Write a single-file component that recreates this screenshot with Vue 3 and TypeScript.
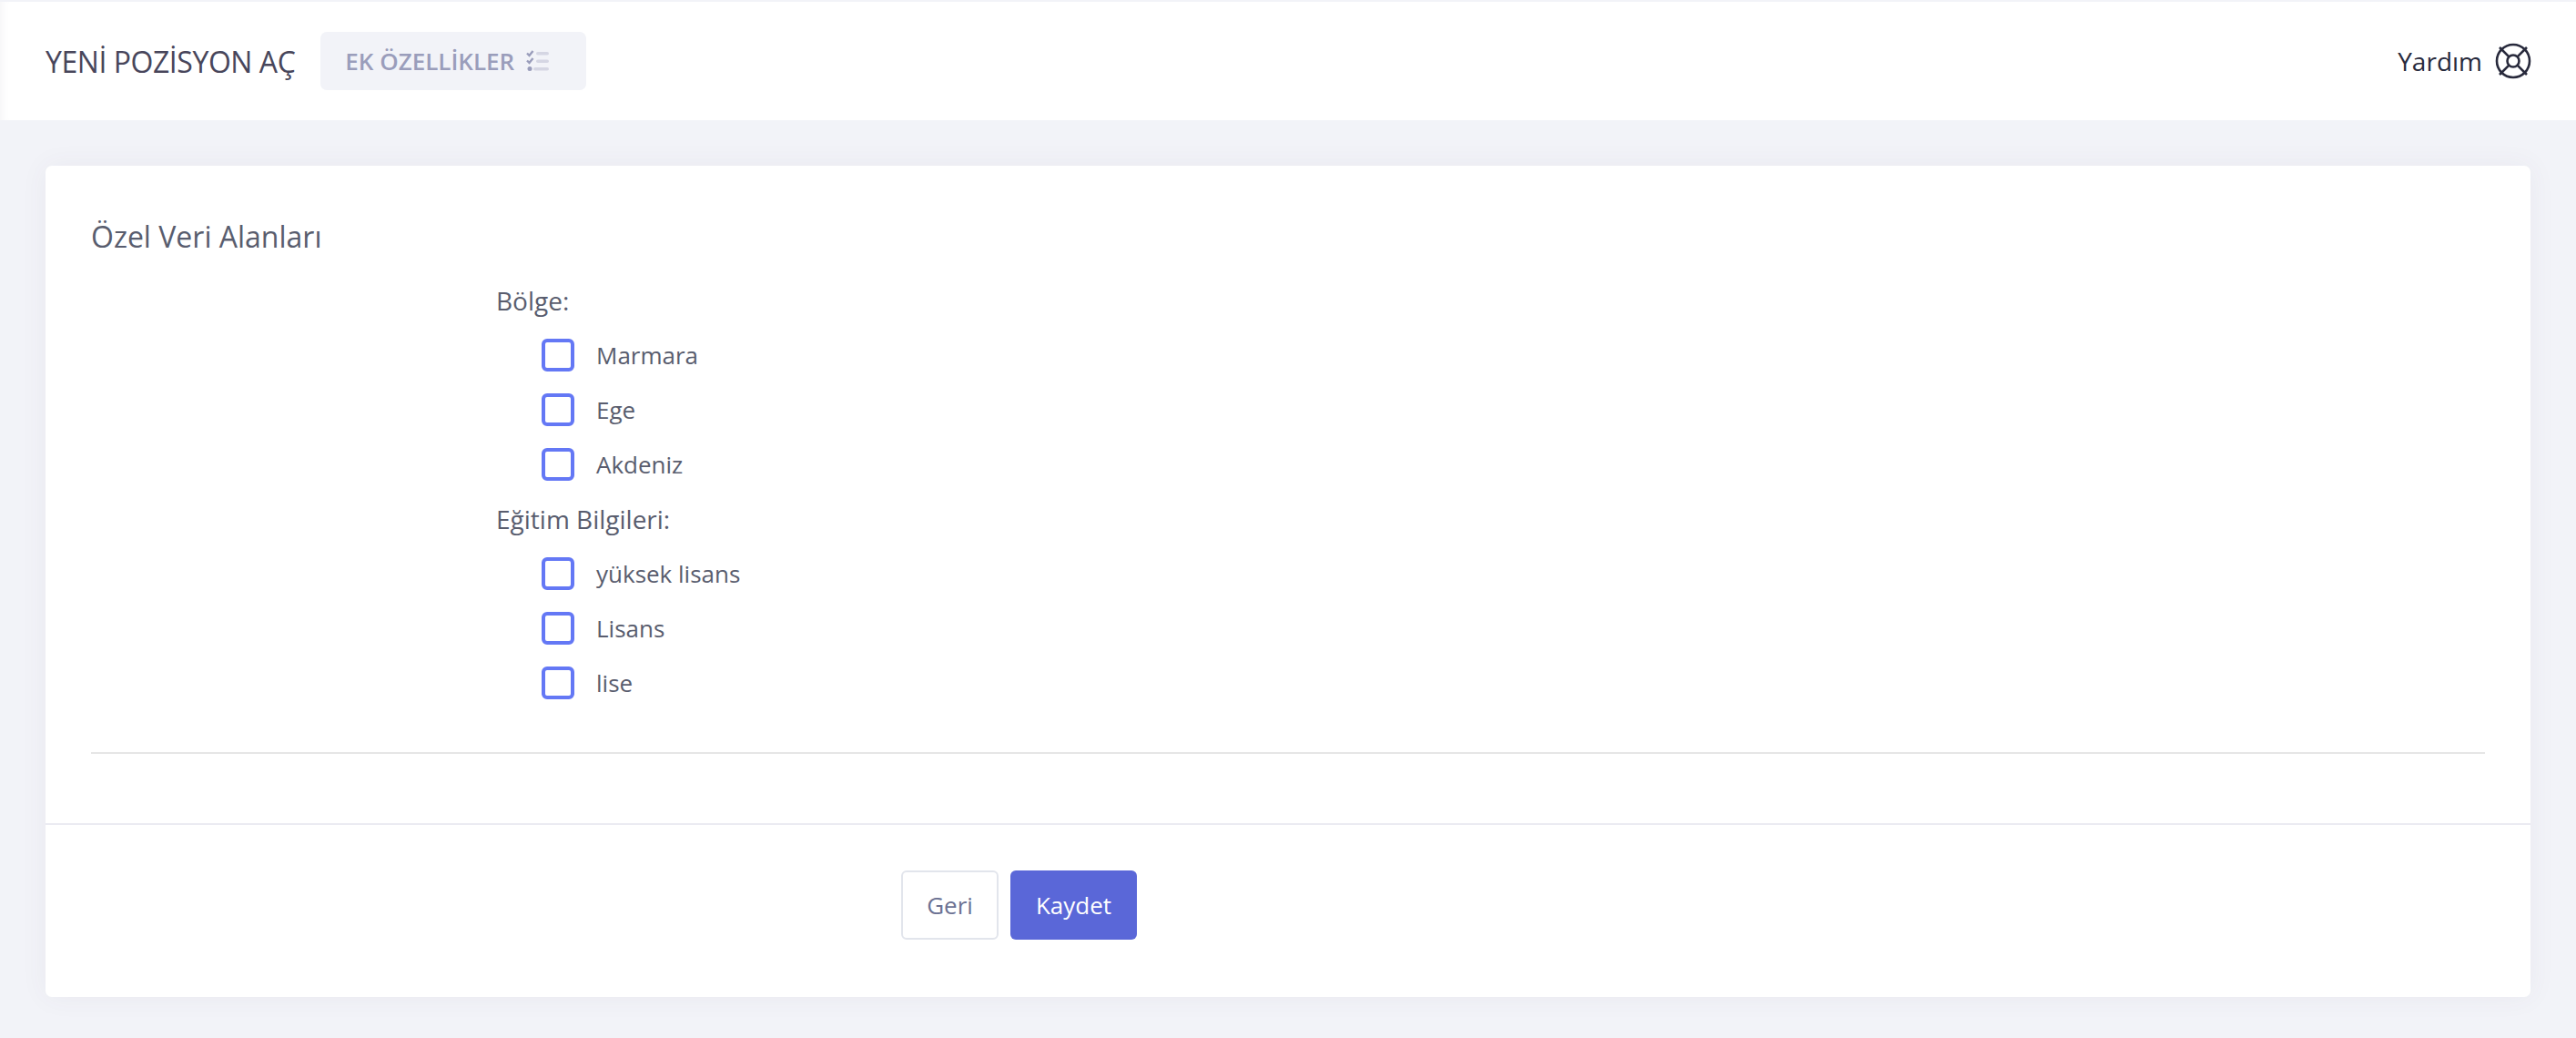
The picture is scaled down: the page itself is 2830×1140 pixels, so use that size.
<script setup lang="ts">
// groupes de cases à cocher du formulaire
const groups = [
  { title: 'Bölge:', options: ['Marmara', 'Ege', 'Akdeniz'] },
  { title: 'Eğitim Bilgileri:', options: ['yüksek lisans', 'Lisans', 'lise'] },
]
</script>

<template>
  <div class="page">
    <header class="topbar">
      <div class="left">
        <h1>YENİ POZİSYON AÇ</h1>
        <button class="extra">
          <span>EK ÖZELLİKLER</span>
          <svg width="26" height="26" viewBox="0 0 26 26" fill="none">
            <path d="M2 4.5l2.5 2.5 4-5" stroke="#9a9dbb" stroke-width="2.4" />
            <path d="M2 12.5l2.5 2.5 4-5" stroke="#9a9dbb" stroke-width="2.4" />
            <circle cx="5" cy="21.5" r="2.5" fill="#9a9dbb" />
            <rect x="12" y="3" width="14" height="3.6" rx="1.8" fill="#d5d6e3" />
            <rect x="12" y="11.5" width="14" height="3.6" rx="1.8" fill="#d5d6e3" />
            <rect x="9" y="20" width="17" height="3.6" rx="1.8" fill="#d5d6e3" />
          </svg>
        </button>
      </div>
      <div class="help">
        <span>Yardım</span>
        <svg width="40" height="40" viewBox="0 0 40 40" fill="none" stroke="#282a3c" stroke-width="2.6">
          <circle cx="20" cy="20" r="18" />
          <circle cx="20" cy="20" r="6.5" />
          <path d="M5 5l10.4 10.4M35 5L24.6 15.4M5 35l10.4-10.4M35 35L24.6 24.6" />
        </svg>
      </div>
    </header>

    <main class="card">
      <div class="body">
        <h2>Özel Veri Alanları</h2>
        <div class="fields">
          <div v-for="group in groups" :key="group.title">
            <div class="group-title">{{ group.title }}</div>
            <label v-for="option in group.options" :key="option" class="option">
              <span class="box"></span>
              <span>{{ option }}</span>
            </label>
          </div>
        </div>
        <hr />
      </div>
      <footer class="actions">
        <button class="btn back">Geri</button>
        <button class="btn save">Kaydet</button>
      </footer>
    </main>
  </div>
</template>

<style>
html,
body {
  margin: 0;
  background: #f2f3f8;
}
</style>

<style scoped>
.page {
  height: 1140px;
  overflow: hidden;
  background: #f2f3f8;
  padding-top: 2px;
  box-sizing: border-box;
  font-family: 'Open Sans', sans-serif;
  color: #575962;
}

.topbar {
  height: 130px;
  background: #fff;
  display: flex;
  justify-content: space-between;
  align-items: center;
  padding: 0 50px;
  box-shadow: inset 12px 0 12px -12px rgba(82, 63, 105, 0.08);
}

.left {
  display: flex;
  align-items: center;
  gap: 28px;
}

h1 {
  margin: 0;
  font-size: 32px;
  font-weight: 400;
  color: #48465b;
  letter-spacing: -0.45px;
}

.extra {
  display: flex;
  align-items: center;
  gap: 12px;
  height: 64px;
  padding: 0 41px 0 27px;
  border: none;
  border-radius: 7px;
  background: #f2f3f8;
  color: #9a9dbb;
  font-family: inherit;
  font-size: 26px;
  font-weight: 600;
}

.help {
  display: flex;
  align-items: center;
  gap: 14px;
  font-size: 28px;
  color: #282a3c;
  margin-right: -1px;
}

.card {
  margin: 50px 50px 0;
  height: 913px;
  background: #fff;
  border-radius: 7px;
  box-shadow: 0 0 30px rgba(82, 63, 105, 0.06);
}

.body {
  height: 724px;
  box-sizing: border-box;
  padding: 56px 50px 0;
  border-bottom: 2px solid #ebebf2;
}

h2 {
  margin: 0;
  font-size: 32px;
  line-height: 44px;
  font-weight: 400;
  color: #595d6e;
}

.fields {
  margin: 18px 0 0 445px;
  font-size: 28px;
  color: #595d6e;
}

.group-title {
  height: 60px;
  line-height: 60px;
}

.option {
  display: flex;
  align-items: center;
  height: 60px;
  padding-left: 50px;
  gap: 24px;
  font-size: 26px;
}

.box {
  width: 36px;
  height: 36px;
  box-sizing: border-box;
  border: 4px solid #6478f5;
  border-radius: 6px;
}

hr {
  margin: 46px 0 0;
  border: none;
  border-top: 2px solid #e6e6e6;
}

.actions {
  display: flex;
  gap: 13px;
  padding: 50px 0 0 940px;
}

.btn {
  height: 76px;
  border-radius: 6px;
  font-family: inherit;
  font-size: 26px;
}

.back {
  width: 107px;
  background: #fff;
  border: 2px solid #e2e5ec;
  color: #6c7293;
}

.save {
  width: 139px;
  border: none;
  background: #5a67d8;
  color: #fff;
}
</style>
